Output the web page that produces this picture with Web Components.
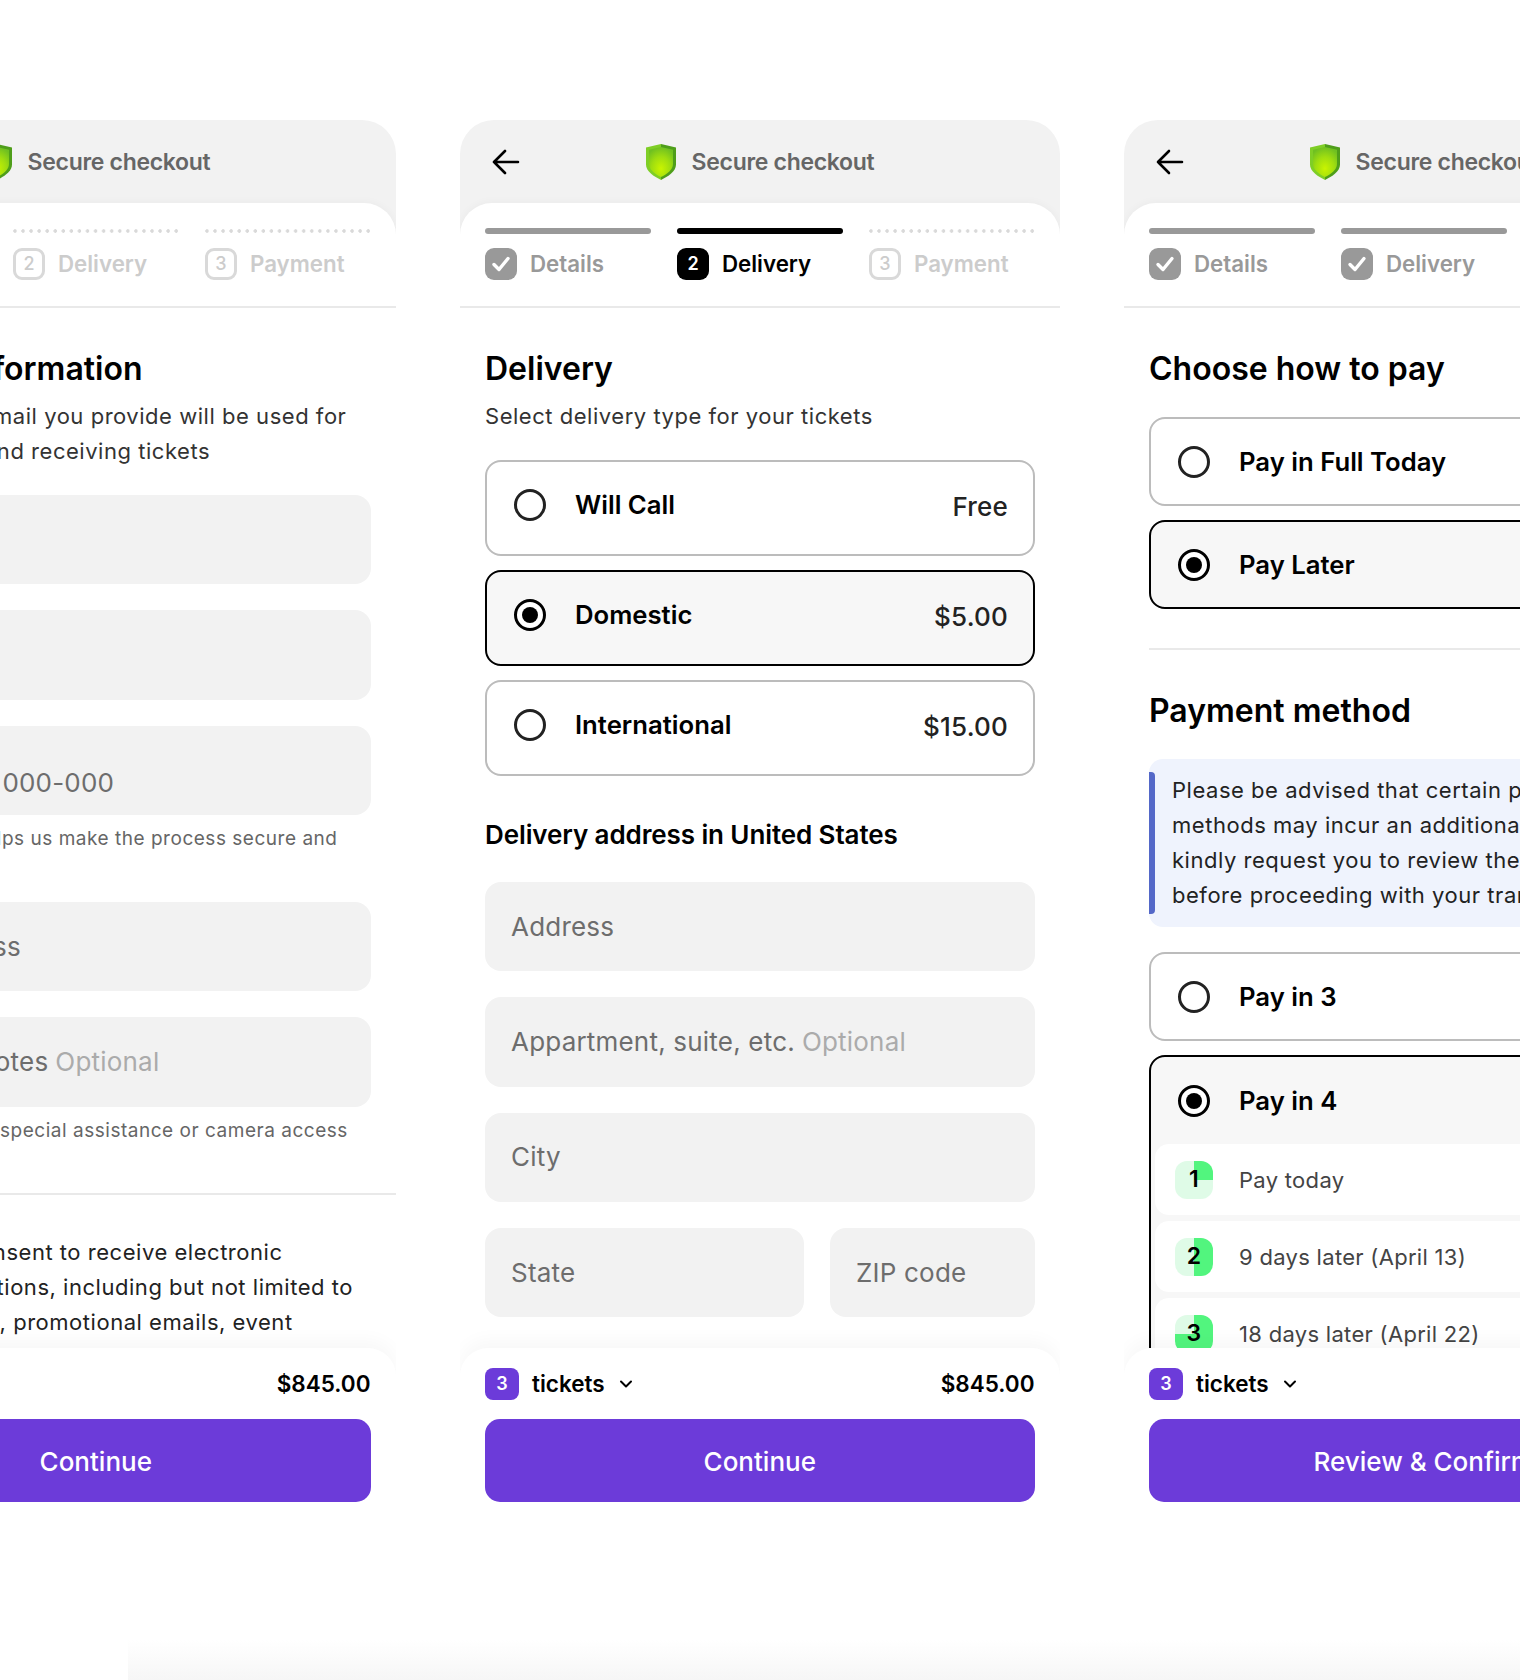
<!DOCTYPE html>
<html lang="en">
<head>
<meta charset="utf-8">
<title>Secure checkout</title>
<style>
  html, body { margin: 0; padding: 0; background: #fff; }
  body { width: 1520px; height: 1680px; overflow: hidden; font-family: Inter, "Noto Sans", sans-serif; }
  .board { display: flex; gap: 64px; margin: 120px 0 0 -204px; height: 1407px; }
  .fade { height: 40px; margin: 113px 0 0 128px; background: linear-gradient(#fff, #f6f6f6); }
</style>
</head>
<body>

<div class="board">
  <!-- step 1, runs off the left side of the page -->
  <checkout-phone step="1" total="$845.00" action="Continue" hide-back>
    <co-heading>Personal information</co-heading>
    <co-copy style="text-indent:6px">Note that any email you provide will be used for<br>your purchase and receiving tickets</co-copy>
    <div style="display:flex;flex-direction:column;gap:26px;margin-top:26px">
      <text-field placeholder="First name"></text-field>
      <text-field placeholder="Last name"></text-field>
      <div>
        <text-field label="Phone" placeholder="+000 (000) 000-000"></text-field>
        <co-copy small style="text-indent:-10px">A phone number helps us make the process secure and<br>fast</co-copy>
      </div>
      <text-field placeholder="Email address" style="margin-top:-8px"></text-field>
      <div>
        <text-field placeholder="Additional notes" optional="Optional"></text-field>
        <co-copy small>Tell us if you need special assistance or camera access</co-copy>
      </div>
    </div>
    <co-rule style="margin:47px -25px 40px"></co-rule>
    <co-copy style="padding-left:50px;color:#222">I hereby consent to receive electronic<br>communications, including but not limited to<br><span style="margin-left:-6px">notifications</span>, promotional emails, event</co-copy>
  </checkout-phone>

  <!-- step 2, the whole phone is visible -->
  <checkout-phone step="2" total="$845.00" action="Continue">
    <co-heading>Delivery</co-heading>
    <co-copy>Select delivery type for your tickets</co-copy>
    <div style="display:flex;flex-direction:column;gap:14px;margin-top:26px">
      <pay-option label="Will Call" price="Free" tall></pay-option>
      <pay-option label="Domestic" price="$5.00" tall selected></pay-option>
      <pay-option label="International" price="$15.00" tall></pay-option>
    </div>
    <co-heading sub style="margin:42px 0 30px">Delivery address in United States</co-heading>
    <div style="display:flex;flex-direction:column;gap:26px">
      <text-field placeholder="Address"></text-field>
      <text-field placeholder="Appartment, suite, etc." optional="Optional"></text-field>
      <text-field placeholder="City"></text-field>
      <div style="display:flex;gap:26px">
        <text-field placeholder="State" style="flex:0 0 319px"></text-field>
        <text-field placeholder="ZIP code" style="flex:1"></text-field>
      </div>
    </div>
  </checkout-phone>

  <!-- step 3, runs off the right side of the page -->
  <checkout-phone step="3" total="$845.00" action="Review &amp; Confirm">
    <co-heading style="margin-bottom:28px">Choose how to pay</co-heading>
    <div style="display:flex;flex-direction:column;gap:14px">
      <pay-option label="Pay in Full Today"></pay-option>
      <pay-option label="Pay Later" selected></pay-option>
    </div>
    <co-rule style="margin:39px 0 41px"></co-rule>
    <co-heading style="margin-bottom:28px">Payment method</co-heading>
    <info-note>Please be advised that certain payment<br>methods may incur an additional fee. We<br>kindly request you to review the details<br>before proceeding with your transaction.</info-note>
    <div style="display:flex;flex-direction:column;gap:14px;margin-top:25px">
      <pay-option label="Pay in 3"></pay-option>
      <pay-option label="Pay in 4" selected>
        <installment-row n="1">Pay today</installment-row>
        <installment-row n="2">9 days later (April 13)</installment-row>
        <installment-row n="3">18 days later (April 22)</installment-row>
      </pay-option>
    </div>
  </checkout-phone>
</div>
<div class="fade"></div>

<script>
// Small helper, every component has the same constructor otherwise
function shadow(el, html) {
    const template = document.createElement('template');
    template.innerHTML = html;
    el.attachShadow({ mode: 'open' });
    el.shadowRoot.appendChild(template.content.cloneNode(true));
}

const shieldIcon = `
<svg width="30" height="36" viewBox="0 0 30 36" aria-hidden="true">
  <defs>
    <radialGradient id="lime" cx="50%" cy="72%" r="72%">
      <stop offset="0" stop-color="#c9f400"/>
      <stop offset="0.55" stop-color="#9fdd10"/>
      <stop offset="1" stop-color="#6fc021"/>
    </radialGradient>
  </defs>
  <path d="M15 0 L0 3.6 V20.5 C0 27.5 8 32.5 15 36 Z" fill="#7fce26"/>
  <path d="M15 0 L30 3.6 V20.5 C30 27.5 22 32.5 15 36 Z" fill="#4f9e1a"/>
  <path d="M15 3 L3 5.8 V20 C3 26 9.5 30.4 15 33 C20.5 30.4 27 26 27 20 V5.8 Z" fill="url(#lime)"/>
</svg>`;

const backIcon = `
<svg width="28" height="28" viewBox="0 0 28 28" fill="none" stroke="#000" stroke-width="2.6" stroke-linecap="round" stroke-linejoin="round" aria-hidden="true">
  <path d="M26 14 H2 M13 3 L2 14 L13 25"/>
</svg>`;

class CheckoutPhone extends HTMLElement {
    constructor() {
        super();
        shadow(this, `
        <style>
            :host { display: flex; flex-direction: column; flex: 0 0 600px; width: 600px; height: 1407px;
                    background: #f2f2f2; border-radius: 34px 34px 0 0; overflow: hidden; }
            header { display: grid; grid-template-columns: 1fr auto 1fr; align-items: center;
                     height: 83px; padding: 1px 32px 0; box-sizing: border-box; flex: none; }
            .back { display: flex; }
            .title { display: flex; align-items: center; gap: 16px; font: 600 23px/30px Inter, sans-serif;
                     color: #666; letter-spacing: -0.3px; white-space: nowrap; }
            .sheet { flex: 1; min-height: 0; display: flex; flex-direction: column; background: #fff;
                     border-radius: 32px 32px 0 0; box-shadow: 0 -1px 8px rgba(0,0,0,.035); }
            .body { flex: 1; min-height: 0; overflow: hidden; padding: 41px 25.5px 0 25px; }
        </style>
        <header>
            <div class="back"></div>
            <div class="title">${shieldIcon}<span>Secure checkout</span></div>
            <div></div>
        </header>
        <div class="sheet">
            <step-bar></step-bar>
            <div class="body"><slot></slot></div>
            <ticket-footer></ticket-footer>
        </div>
        `);
    }

    connectedCallback() {
        if (!this.hasAttribute('hide-back')) this.shadowRoot.querySelector('.back').innerHTML = backIcon;
        this.shadowRoot.querySelector('step-bar').setAttribute('current', this.getAttribute('step'));
        const footer = this.shadowRoot.querySelector('ticket-footer');
        footer.setAttribute('total', this.getAttribute('total'));
        footer.setAttribute('action', this.getAttribute('action'));
    }
}

class StepBar extends HTMLElement {
    constructor() {
        super();
        shadow(this, `
        <style>
            :host { display: grid; grid-template-columns: repeat(3, 1fr); column-gap: 26px; flex: none;
                    padding: 25px 25px 26px; border-bottom: 2px solid #e9e9e9; }
            .bar { height: 6px; border-radius: 3px; }
            .row { display: flex; align-items: center; gap: 13px; margin-top: 14px; height: 32px;
                   font: 600 22.3px/32px Inter, sans-serif; white-space: nowrap; }
            .box { width: 32px; height: 32px; border-radius: 9px; box-sizing: border-box; display: flex;
                   align-items: center; justify-content: center; font: 600 18px/1 Inter, sans-serif; }
            .done .bar { background: #999; }
            .done .row { color: #999; }
            .done .box { background: #999; }
            .active .bar { background: #000; }
            .active .row { color: #000; }
            .active .box { background: #000; color: #fff; }
            .todo .bar { background: radial-gradient(circle at 2px 3px, #d9d9d9 1.5px, transparent 2px) 0 0 / 8.07px 6px repeat-x; border-radius: 0; }
            .todo .row { color: #ccc; }
            .todo .box { border: 3px solid #d9d9d9; color: #ccc; font-weight: 500; }
        </style>
        <slot></slot>
        `);
    }

    static get observedAttributes() { return ['current']; }

    // the phone sets current after this element is already in its shadow root
    attributeChangedCallback(_name, _old, value) {
        const current = Number(value);
        ['Details', 'Delivery', 'Payment'].forEach((name, i) => {
            const n = i + 1;
            const state = n < current ? 'done' : n === current ? 'active' : 'todo';
            const inner = state === 'done'
                ? `<svg width="22" height="20" viewBox="0 0 22 20" fill="none" stroke="#fff" stroke-width="3.4" stroke-linecap="round" stroke-linejoin="round"><path d="M4 10.5 L9 15.5 L18 4.5"/></svg>`
                : n;
            const col = document.createElement('div');
            col.className = state;
            col.innerHTML = `<div class="bar"></div><div class="row"><span class="box">${inner}</span><span>${name}</span></div>`;
            this.shadowRoot.appendChild(col);
        });
    }
}

class TicketFooter extends HTMLElement {
    constructor() {
        super();
        shadow(this, `
        <style>
            :host { display: block; flex: none; position: relative; background: #fff; padding: 20px 25.5px 0 25px;
                    height: 179px; box-sizing: border-box; border-radius: 28px 28px 0 0;
                    box-shadow: 0 -8px 18px rgba(0,0,0,.03); }
            .top { display: flex; align-items: center; height: 32px; font: 600 22.5px/32px Inter, sans-serif; color: #000; }
            .count { width: 34px; height: 32px; border-radius: 8px; background: #6c3bd9; color: #fff; margin-right: 13px;
                     display: flex; align-items: center; justify-content: center; font: 600 18px/1 Inter, sans-serif; }
            svg { margin-left: 14px; }
            .total { margin-left: auto; }
            .btn { display: flex; align-items: center; justify-content: center; height: 83px; box-sizing: border-box;
                   padding-top: 3px; margin-top: 19px; background: #6c3bd9; color: #fff; border-radius: 15px;
                   font: 500 26px/1 Inter, sans-serif; white-space: nowrap; }
            .line { height: 1px; background: #f4f4f4; margin-top: 25px; }
        </style>
        <div class="top">
            <span class="count">3</span>
            <span>tickets</span>
            <svg width="14" height="10" viewBox="0 0 14 10" fill="none" stroke="#000" stroke-width="2" stroke-linecap="round" stroke-linejoin="round"><path d="M2 2.5 L7 7.5 L12 2.5"/></svg>
            <span class="total"></span>
        </div>
        <div class="btn"></div>
        <div class="line"></div>
        `);
    }

    static get observedAttributes() { return ['total', 'action']; }

    attributeChangedCallback(name, _old, value) {
        const target = name === 'total' ? '.total' : '.btn';
        this.shadowRoot.querySelector(target).textContent = value;
    }
}

class CoHeading extends HTMLElement {
    constructor() {
        super();
        shadow(this, `
        <style>
            :host { display: block; font: 600 32px/40px Inter, sans-serif; color: #000; white-space: nowrap; }
            :host([sub]) { font-size: 26px; line-height: 34px; letter-spacing: -0.1px; }
        </style>
        <slot></slot>
        `);
    }
}

class CoCopy extends HTMLElement {
    constructor() {
        super();
        shadow(this, `
        <style>
            :host { display: block; font: 400 22px/35px Inter, sans-serif; color: #333; margin-top: 10px; white-space: nowrap; letter-spacing: 0.53px; }
            :host([small]) { font-size: 19px; line-height: 30px; color: #666; margin-top: 9px; letter-spacing: 0.52px; }
        </style>
        <slot></slot>
        `);
    }
}

class CoRule extends HTMLElement {
    constructor() {
        super();
        shadow(this, `<style>:host { display: block; height: 2px; background: #e9e9e9; }</style>`);
    }
}

class TextField extends HTMLElement {
    constructor() {
        super();
        shadow(this, `
        <style>
            :host { display: flex; align-items: center; height: 89.33px; box-sizing: border-box; padding: 0 26px;
                    background: #f2f2f2; border-radius: 16px; font: 400 26px/34px Inter, sans-serif;
                    color: #6d6d6d; white-space: nowrap; letter-spacing: 0.2px; }
            :host([label]) { padding: 25px 26px 0 30px; }
            .opt { color: #ababab; margin-left: 7px; }
        </style>
        <span class="text"></span><span class="opt"></span>
        `);
    }

    connectedCallback() {
        this.shadowRoot.querySelector('.text').textContent = this.getAttribute('placeholder');
        this.shadowRoot.querySelector('.opt').textContent = this.getAttribute('optional') || '';
    }
}

class PayOption extends HTMLElement {
    constructor() {
        super();
        shadow(this, `
        <style>
            :host { display: block; box-sizing: border-box; border: 2px solid #bcbcbc; border-radius: 16px; background: #fff; overflow: hidden; }
            :host([selected]) { border-color: #000; background: #f7f7f7; }
            .head { display: flex; align-items: center; height: 85px; box-sizing: border-box; padding: 0 24.5px 0 27px;
                    font: 600 25.7px/34px Inter, sans-serif; color: #000; white-space: nowrap; }
            :host([tall]) .head { padding-bottom: 7px; height: 92px; }
            :host(:not(:empty)) .head { height: 87px; }
            .radio { width: 32px; height: 32px; box-sizing: border-box; border: 3px solid #222; border-radius: 50%;
                     margin-right: 29px; flex: none; display: flex; align-items: center; justify-content: center; background: #fff; }
            :host([selected]) .radio { border-color: #000; }
            :host([selected]) .radio::after { content: ""; width: 16px; height: 16px; border-radius: 50%; background: #000; }
            .price { margin-left: auto; font-weight: 500; font-size: 26px; letter-spacing: 0.2px; color: #222; position: relative; top: 2px; }
            .rows { display: flex; flex-direction: column; gap: 6px; padding: 0 4px; }
        </style>
        <div class="head"><span class="radio"></span><span class="label"></span><span class="price"></span></div>
        <div class="rows"><slot></slot></div>
        `);
    }

    connectedCallback() {
        this.shadowRoot.querySelector('.label').textContent = this.getAttribute('label');
        this.shadowRoot.querySelector('.price').textContent = this.getAttribute('price') || '';
    }
}

class InstallmentRow extends HTMLElement {
    constructor() {
        super();
        shadow(this, `
        <style>
            :host { display: flex; align-items: center; height: 71px; background: #fff; border-radius: 14px; padding-left: 20px;
                    font: 400 22px/30px Inter, sans-serif; color: #444; white-space: nowrap; letter-spacing: 0.3px; }
            .num { width: 38px; height: 38px; border-radius: 12px; margin-right: 26px; flex: none; display: flex;
                   align-items: center; justify-content: center; font: 600 23px/1 Inter, sans-serif; color: #000; }
        </style>
        <span class="num"></span><slot></slot>
        `);
    }

    connectedCallback() {
        const n = Number(this.getAttribute('n'));
        const num = this.shadowRoot.querySelector('.num');
        num.textContent = n;
        const stop = n * 25;
        num.style.background = `conic-gradient(#52f57e 0 ${stop}%, #dffbe7 ${stop}% 100%)`;
    }
}

class InfoNote extends HTMLElement {
    constructor() {
        super();
        shadow(this, `
        <style>
            :host { display: block; position: relative; box-sizing: border-box; height: 168px; padding: 14px 0 0 23px;
                    background: #eff3fd; border-radius: 14px; font: 400 22px/35px Inter, sans-serif; color: #222;
                    white-space: nowrap; letter-spacing: 0.53px; }
            .mark { position: absolute; left: 0; top: 13px; bottom: 13px; width: 6px; background: #5468c8; border-radius: 0 4px 4px 0; }
        </style>
        <span class="mark"></span><slot></slot>
        `);
    }
}

customElements.define('step-bar', StepBar);
customElements.define('ticket-footer', TicketFooter);
customElements.define('checkout-phone', CheckoutPhone);
customElements.define('co-heading', CoHeading);
customElements.define('co-copy', CoCopy);
customElements.define('co-rule', CoRule);
customElements.define('text-field', TextField);
customElements.define('pay-option', PayOption);
customElements.define('installment-row', InstallmentRow);
customElements.define('info-note', InfoNote);
</script>
</body>
</html>
